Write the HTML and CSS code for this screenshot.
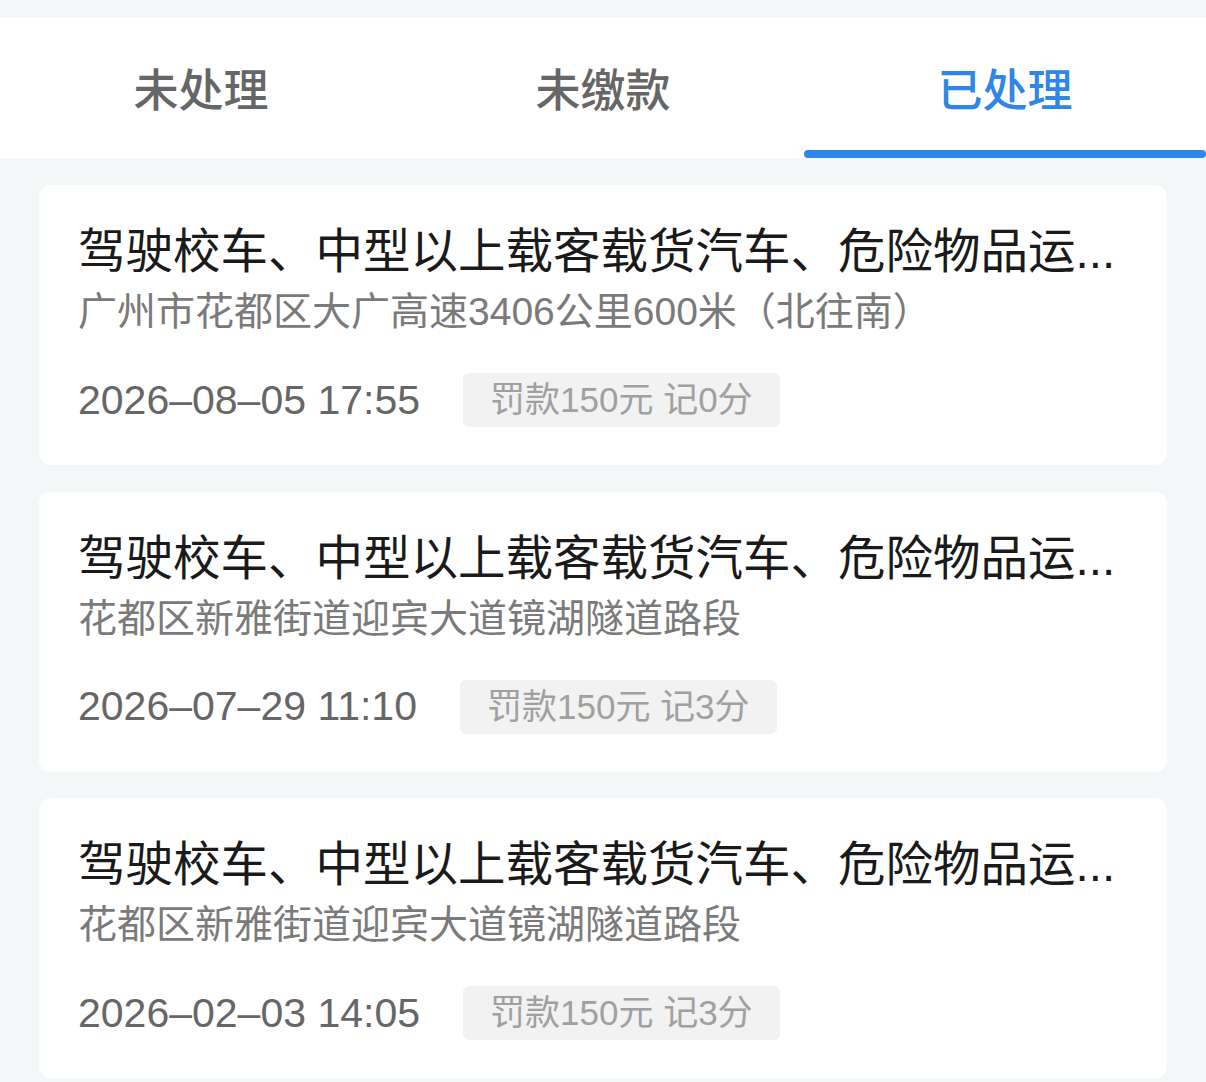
FILE: index.html
```html
<!DOCTYPE html>
<html lang="zh-CN">
<head>
<meta charset="utf-8">
<title>违法记录</title>
<link rel="stylesheet" href="styles.css">
</head>
<body>
<div class="page">
  <nav class="tabs">
    <div class="tab"><span class="tab-label">未处理</span><span class="tab-bar"></span></div>
    <div class="tab"><span class="tab-label">未缴款</span><span class="tab-bar"></span></div>
    <div class="tab active"><span class="tab-label">已处理</span><span class="tab-bar"></span></div>
  </nav>
  <main class="list">
    <section class="card">
      <h2 class="title">驾驶校车、中型以上载客载货汽车、危险物品运...</h2>
      <p class="addr">广州市花都区大广高速3406公里600米（北往南）</p>
      <div class="meta">
        <span class="date">2026–08–05 17:55</span>
        <span class="tag">罚款150元 记0分</span>
      </div>
    </section>
    <section class="card">
      <h2 class="title">驾驶校车、中型以上载客载货汽车、危险物品运...</h2>
      <p class="addr">花都区新雅街道迎宾大道镜湖隧道路段</p>
      <div class="meta">
        <span class="date">2026–07–29 11:10</span>
        <span class="tag">罚款150元 记3分</span>
      </div>
    </section>
    <section class="card">
      <h2 class="title">驾驶校车、中型以上载客载货汽车、危险物品运...</h2>
      <p class="addr">花都区新雅街道迎宾大道镜湖隧道路段</p>
      <div class="meta">
        <span class="date">2026–02–03 14:05</span>
        <span class="tag">罚款150元 记3分</span>
      </div>
    </section>
  </main>
</div>
</body>
</html>
```
FILE: styles.css
```css
html, body {
  margin: 0;
  padding: 0;
  background: #f3f7f8;
}
body {
  font-family: "Liberation Sans", "Noto Sans CJK SC", sans-serif;
  width: 1206px;
  height: 1082px;
  overflow: hidden;
}
.page {
  padding-top: 18px;
}
.tabs {
  display: grid;
  grid-template-columns: repeat(3, 1fr);
  height: 140px;
  background: #ffffff;
}
.tab {
  display: flex;
  flex-direction: column;
  align-items: center;
}
.tab-label {
  margin-top: 44px;
  line-height: 60px;
  font-size: 45px;
  font-weight: 500;
  color: #666666;
}
.tab-bar {
  margin-top: auto;
  align-self: stretch;
  height: 8px;
  border-radius: 4px;
}
.tab.active .tab-label {
  color: #2f86e6;
}
.tab.active .tab-bar {
  background: #2f86e6;
}
.list {
  display: flex;
  flex-direction: column;
  gap: 26.5px;
  padding: 27px 39px 0;
}
.card {
  background: #ffffff;
  border-radius: 12px;
  height: 280px;
  box-sizing: border-box;
  padding: 37px 39px 0;
}
.title {
  margin: 0;
  font-size: 47.5px;
  font-weight: 400;
  line-height: 60px;
  color: #1a1a1a;
  white-space: nowrap;
  overflow: hidden;
}
.addr {
  margin: 0;
  font-size: 39px;
  line-height: 60px;
  color: #7a7a7a;
  white-space: nowrap;
}
.meta {
  display: flex;
  align-items: center;
  gap: 43px;
  margin-top: 31px;
}
.date {
  font-size: 41px;
  color: #666666;
}
.tag {
  height: 54px;
  line-height: 54px;
  padding: 0 27px;
  border-radius: 6px;
  background: #f2f2f2;
  color: #a0a0a0;
  font-size: 35px;
}
```
